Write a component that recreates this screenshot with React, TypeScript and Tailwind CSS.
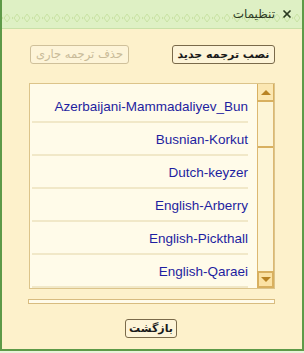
import { X } from 'lucide-react';

const translations = [
  'Azerbaijani-Mammadaliyev_Bun',
  'Busnian-Korkut',
  'Dutch-keyzer',
  'English-Arberry',
  'English-Pickthall',
  'English-Qaraei',
];

function TitlePattern() {
  return (
    <svg className="absolute left-0 top-[12px]" width="304" height="12">
      <defs>
        <pattern id="dots" width="10" height="12" patternUnits="userSpaceOnUse">
          <path d="M5 2 L8 6 L5 10 L2 6 Z" fill="none" stroke="#c8e2a2" strokeWidth="1" />
          <circle cx="0" cy="6" r="1.2" fill="#c8e2a2" />
        </pattern>
      </defs>
      <rect width="304" height="12" fill="url(#dots)" />
    </svg>
  );
}

export default function App() {
  return (
    <div className="w-[304px] h-[353px] bg-[#e9f3da] font-['Liberation_Sans',sans-serif]">
      <div className="h-[351px] flex flex-col border-x-2 border-b-2 border-[#5e9a48] bg-[#fdf1cb]">
        {/* Title bar */}
        <div className="relative h-[29px] flex-shrink-0 bg-[#def0c4] border-b border-[#c9e0a8] overflow-hidden">
          <TitlePattern />
          <div className="relative flex items-center justify-end gap-[6px] h-full pr-[9px]">
            <span dir="rtl" className="text-[12px] text-[#2e3a24] font-['DejaVu_Sans',sans-serif]">تنظیمات</span>
            <X size={12} strokeWidth={3.5} className="text-[#2a3a20]" />
          </div>
        </div>

        {/* Top buttons */}
        <div className="flex justify-between pl-[28px] pr-[27px] pt-[16px]">
          <button
            disabled
            dir="rtl"
            className="w-[99px] h-[19px] rounded-[3px] border border-[#cfc09a] bg-[#fdf4d8] text-[11.5px] leading-none text-[#c9bb98] font-['DejaVu_Sans',sans-serif]"
          >
            حذف ترجمه جاری
          </button>
          <button
            dir="rtl"
            className="w-[103px] h-[19px] rounded-[3px] border border-[#7a6a4a] bg-[#fdf4d8] text-[11px] leading-none font-bold text-[#1a1a1a] font-['DejaVu_Sans',sans-serif]"
          >
            نصب ترجمه جدید
          </button>
        </div>

        {/* List */}
        <div className="ml-[27px] mr-[27px] mt-[19px] h-[206px] flex border border-[#dcc48a] bg-[#fffbe9]">
          <div className="flex-1 overflow-hidden pt-[6px] pl-[2px] pr-[9px]">
            {translations.map(t => (
              <div
                key={t}
                className="h-[33px] flex items-center justify-end border-b-2 border-[#f1e8c8] text-[13.5px] text-[#1e1ea0] pt-[4px]"
              >
                {t}
              </div>
            ))}
          </div>
          {/* Scrollbar */}
          <div className="w-[17px] flex flex-col border-x border-[#dcb872] bg-[#fdf5d6]">
            <div className="h-[18px] flex items-center justify-center border-b-2 border-[#d8b060] bg-[#fbe7b2] -mx-px border-x border-x-[#d8b060]">
              <div className="w-0 h-0 border-x-[5px] border-x-transparent border-b-[5px] border-b-[#b88324]" />
            </div>
            <div className="h-[46px] border-b-2 border-[#d8b060]" />
            <div className="flex-1" />
            <div className="h-[17px] flex items-center justify-center border-2 border-[#d8b060] bg-[#fbe2a4] -mx-px">
              <div className="w-0 h-0 border-x-[5px] border-x-transparent border-t-[5px] border-t-[#b88324]" />
            </div>
          </div>
        </div>

        {/* Progress bar */}
        <div className="ml-[26px] mr-[27px] mt-[10px] h-[5px] border border-[#d8bc80] bg-[#fffbea]" />

        {/* Back button */}
        <div className="flex justify-center pt-[15px]">
          <button
            dir="rtl"
            className="w-[52px] h-[19px] rounded-[3px] border border-[#7a6a4a] bg-[#fdf4d8] text-[11px] leading-none font-bold text-[#1a1a1a] font-['DejaVu_Sans',sans-serif] -ml-[2px]"
          >
            بازگشت
          </button>
        </div>
      </div>
    </div>
  );
}
